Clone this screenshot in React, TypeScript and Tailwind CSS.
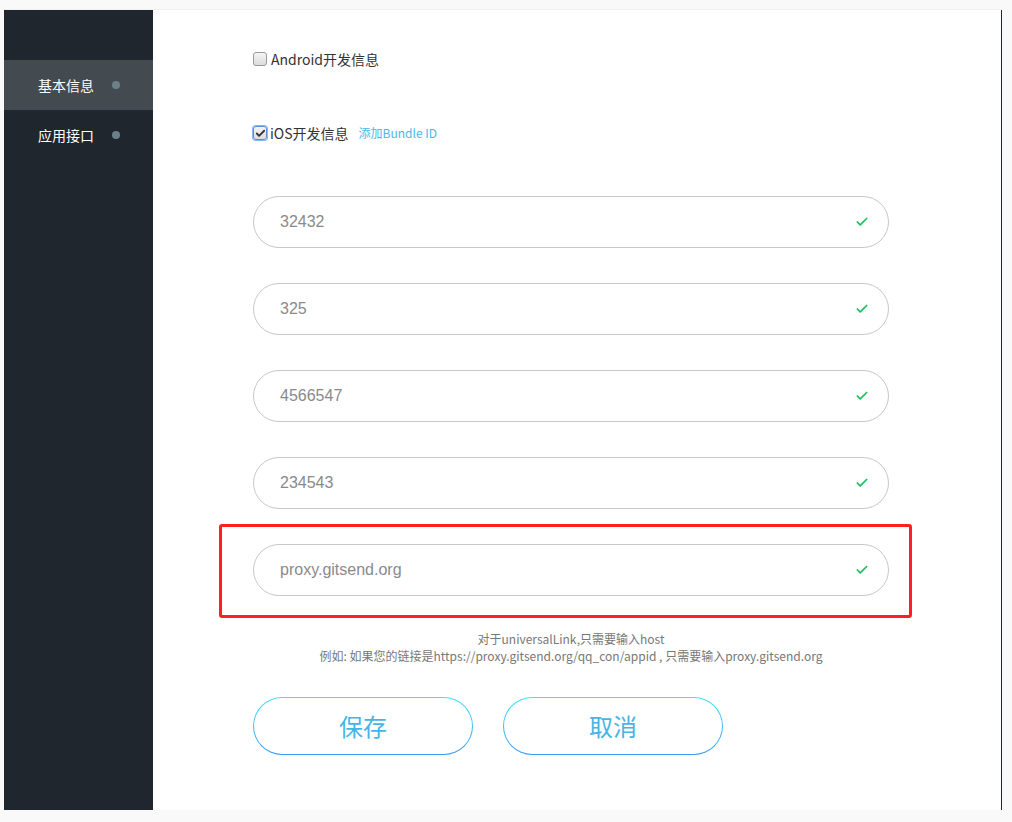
import { Check } from 'lucide-react'

const CJK = "font-['Noto_Sans_CJK_SC',sans-serif]"

const navItems = [
  { label: '基本信息', active: true },
  { label: '应用接口', active: false },
]

const values = ['32432', '325', '4566547', '234543']

function Field({ value }: { value: string }) {
  return (
    <div className="flex h-[52px] w-[636px] items-center justify-between rounded-full border border-[#c8c8c8] bg-white pl-[26px] pr-[19px]">
      <span className="font-['Liberation_Sans',Arial,sans-serif] text-[16px] text-[#8a8a8a]">{value}</span>
      <Check className="h-[14px] w-[14px] text-[#1dbf5e]" strokeWidth={3} />
    </div>
  )
}

function Box({ checked }: { checked?: boolean }) {
  return (
    <span
      className={
        'relative flex h-[14px] w-[14px] items-center justify-center rounded-[3px] border bg-gradient-to-b from-[#f4f4f4] to-[#dcdcdc] ' +
        (checked ? 'border-[#5a8fe0] ring-1 ring-[#8ab4f0]' : 'border-[#9a9a9a]')
      }
    >
      {checked && <Check className="h-[11px] w-[11px] text-[#333]" strokeWidth={4} />}
    </span>
  )
}

function PillButton({ label }: { label: string }) {
  return (
    <div className="h-[58px] w-[220px] rounded-full bg-gradient-to-b from-[#3de3f9] to-[#3a9cf0] p-px">
      <div className={`flex h-full w-full items-center justify-center rounded-full bg-white text-[24px] text-[#45b5e6] ${CJK}`}>
        {label}
      </div>
    </div>
  )
}

export default function App() {
  return (
    <div className="min-h-[822px] bg-[#f9f9f9] pl-[4px] pt-[9px] pr-[10px]">
      <div className="flex h-[801px] border-t border-[#efefef]">
        <aside className={`w-[149px] shrink-0 bg-[#1f262e] pt-[50px] ${CJK}`}>
          {navItems.map((item) => (
            <div
              key={item.label}
              className={
                'flex h-[50px] items-center pl-[34px] text-[14px] text-white ' + (item.active ? 'bg-[#434a50]' : '')
              }
            >
              <span>{item.label}</span>
              <span className="ml-[18px] h-[8px] w-[8px] rounded-full bg-[#6b8189]" />
            </div>
          ))}
        </aside>

        <main className="flex-1 border-r border-[#1f262e] bg-white pl-[100px] pt-[39px]">
          <div className={`flex h-[20px] items-center gap-[4px] text-[14px] text-[#333] ${CJK}`}>
            <Box />
            <span>Android开发信息</span>
          </div>

          <div className={`mt-[54px] flex h-[20px] items-center text-[14px] text-[#333] ${CJK}`}>
            <Box checked />
            <span className="ml-[3px]">iOS开发信息</span>
            <span className="ml-[10px] text-[12px] text-[#4ab8e8]">添加Bundle ID</span>
          </div>

          <div className="mt-[53px] flex flex-col gap-[35px]">
            {values.map((v) => (
              <Field key={v} value={v} />
            ))}
          </div>

          <div className="ml-[-34px] mt-[15px] w-[693px] rounded-[3px] border-[3px] border-[#ff2020] pb-[19px] pl-[31px] pt-[17px]">
            <Field value="proxy.gitsend.org" />
          </div>

          <div className={`mt-[12px] w-[636px] text-center text-[12px] leading-[17px] text-[#777] ${CJK}`}>
            <p>对于universalLink,只需要输入host</p>
            <p>例如: 如果您的链接是https://proxy.gitsend.org/qq_con/appid , 只需要输入proxy.gitsend.org</p>
          </div>

          <div className="mt-[33px] flex gap-[30px]">
            <PillButton label="保存" />
            <PillButton label="取消" />
          </div>
        </main>
      </div>
    </div>
  )
}
